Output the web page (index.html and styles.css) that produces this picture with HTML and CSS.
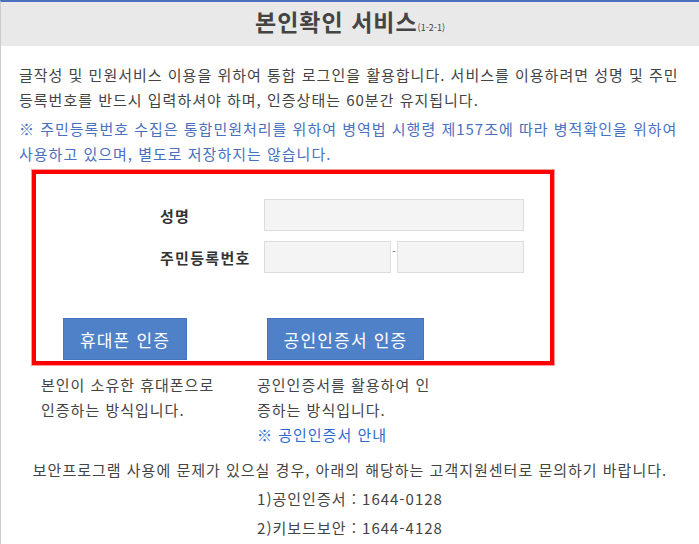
FILE: index.html
```html
<!DOCTYPE html>
<html lang="ko">

<head>
    <title>본인확인 서비스</title>
    <meta charset="UTF-8" />
    <meta name="viewport" content="width=device-width, initial-scale=1.0" />
    <link rel="stylesheet" href="styles.css">
</head>

<body>
    <div class="page">
        <div class="title-bar">
            <h1 class="title">본인확인 서비스<small>(1-2-1)</small></h1>
        </div>
        <div class="content">
            <p class="intro">글작성 및 민원서비스 이용을 위하여 통합 로그인을 활용합니다. 서비스를 이용하려면 성명 및 주민등록번호를 반드시 입력하셔야 하며, 인증상태는 60분간 유지됩니다.</p>
            <p class="note">※ 주민등록번호 수집은 통합민원처리를 위하여 병역법 시행령 제157조에 따라 병적확인을 위하여 사용하고 있으며, 별도로 저장하지는 않습니다.</p>

            <!-- 본인확인 입력 -->
            <div class="auth-box">
                <form class="auth-form">
                    <label for="userName">성명</label>
                    <input type="text" id="userName" class="field-wide" />
                    <label for="juminFront">주민등록번호</label>
                    <div class="jumin">
                        <input type="text" id="juminFront" class="field-half" />
                        <span class="dash">-</span>
                        <input type="password" id="juminBack" class="field-half" />
                    </div>
                </form>
                <div class="btn-row">
                    <button type="button" class="btn btn-phone">휴대폰 인증</button>
                    <button type="button" class="btn btn-cert">공인인증서 인증</button>
                </div>
            </div>

            <div class="desc-row">
                <div class="desc">본인이 소유한 휴대폰으로 인증하는 방식입니다.</div>
                <div class="desc">공인인증서를 활용하여 인증하는 방식입니다.<br><a href="#" class="link">※ 공인인증서 안내</a></div>
            </div>

            <p class="help">보안프로그램 사용에 문제가 있으실 경우, 아래의 해당하는 고객지원센터로 문의하기 바랍니다.</p>
            <p class="help">1)공인인증서 : 1644-0128</p>
            <p class="help">2)키보드보안 : 1644-4128</p>
        </div>
    </div>
</body>

</html>
```

FILE: styles.css
```css
body {
    margin: 0;
    font-family: "Noto Sans CJK KR", "Noto Sans", sans-serif;
    font-size: 15px;
    letter-spacing: 1px;
    color: #444;
    background-color: #fff;
}

.page {
    border-top: 2px solid #4a6fbb;
    border-left: 1px solid #ccc;
    min-height: 560px;
}

.title-bar {
    background-color: #e9e9e9;
    height: 44px;
    display: flex;
    align-items: center;
    justify-content: center;
}

.title {
    margin: 0;
    font-size: 23px;
    font-weight: bold;
    color: #444;
    line-height: 30px;
}

.title small {
    font-size: 9px;
    font-weight: normal;
    letter-spacing: 0;
}

.content {
    padding: 16px 18px 0 18px;
}

.intro,
.note {
    margin: 0 0 4px 0;
    line-height: 25px;
}

.note {
    color: #4a70c0;
}

/* red frame around the form */
.auth-box {
    width: 514px;
    margin: 3px 0 0 13px;
    border: 4px solid #f00;
    box-shadow: 0 0 0 1px #ff9a9a;
    padding: 25px 0 1px 0;
}

.auth-form {
    display: grid;
    grid-template-columns: 104px 260px;
    row-gap: 10px;
    align-items: center;
    padding-left: 124px;
}

.auth-form label {
    font-weight: bold;
    color: #333;
    letter-spacing: 1.3px;
}

.auth-form input {
    box-sizing: border-box;
    height: 32px;
    border: 1px solid #ddd;
    background-color: #f4f4f4;
    margin: 0;
    font-size: inherit;
}

.field-wide {
    width: 260px;
}

.jumin {
    display: flex;
    align-items: flex-start;
}

.field-half {
    width: 127px;
}

.dash {
    width: 6px;
    text-align: center;
    font-size: 10px;
    letter-spacing: 0;
    line-height: 10px;
    margin-top: 5px;
    color: #555;
}

.btn-row {
    display: flex;
    gap: 80px;
    margin-top: 45px;
    padding-left: 27px;
}

.btn {
    height: 42px;
    border: 1px solid #4474ba;
    background-color: #4f81c8;
    color: #fff;
    font-family: inherit;
    font-size: 17px;
    letter-spacing: 1.2px;
    padding: 0;
}

.btn-phone {
    width: 124px;
}

.btn-cert {
    width: 157px;
}

.desc-row {
    display: flex;
    gap: 36px;
    margin: 7px 0 0 22px;
}

.desc {
    width: 180px;
    line-height: 25px;
}

.link {
    color: #2a6bd0;
    text-decoration: none;
}

.help {
    margin: 0 0 4px 0;
    text-align: center;
    line-height: 25px;
}

.desc-row + .help {
    margin-top: 10px;
}
```
